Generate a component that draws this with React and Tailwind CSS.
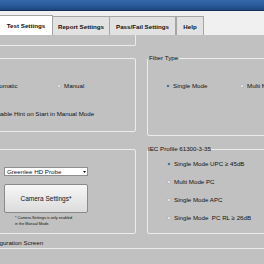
import React from "react";

const Radio = ({ checked }) => (
  <span className="w-[4px] h-[4px] rounded-full bg-[#f7f7f7] border border-[#b5b5b5] flex items-center justify-center shrink-0">
    {checked && <span className="w-[2px] h-[2px] rounded-full bg-[#1c4f7c]" />}
  </span>
);

const Option = ({ label, checked }) => (
  <div className="flex items-center gap-[3px] h-[7px] whitespace-pre">
    <Radio checked={checked} />
    <span>{label}</span>
  </div>
);

const Tab = ({ children, className }) => (
  <div
    className={
      "h-[19px] bg-[#e2e2e2] border-t border-r border-[#a5a5a5] flex items-center justify-center font-bold " +
      className
    }
  >
    {children}
  </div>
);

export default function App() {
  return (
    <div className="w-[264px] h-[264px] overflow-hidden bg-[#c1c1c1] text-[#111] font-['Liberation_Sans',Arial,sans-serif] text-[6.2px] leading-[7px]">
      {/* title bar */}
      <div className="h-[11px] bg-linear-to-b from-[#3368a9] via-[#2b5c9c] to-[#1f4680] border-b border-[#152f57]" />

      {/* tabs */}
      <div className="h-[24px] bg-[#f0f0f0] flex items-end">
        <div className="w-[53px] h-[20px] bg-white border-t border-r border-[#a5a5a5] flex items-center justify-center font-bold">
          Test Settings
        </div>
        <Tab className="w-[57px]">Report Settings</Tab>
        <Tab className="w-[66px]">Pass/Fail Settings</Tab>
        <Tab className="w-[28px] border-l">Help</Tab>
      </div>

      {/* content */}
      <div className="flex">
        <div className="-ml-[24px] w-[160px] shrink-0 flex flex-col">
          <div className="h-[11px] border-b border-r border-[#ececec] rounded-br-[2px]" />

          <div className="mt-[12px] h-[74px] border border-[#ececec] rounded-[2px] pt-[23px]">
            <div className="flex">
              <div className="ml-[6px] w-[74px]">
                <Option label="Automatic" />
              </div>
              <Option label="Manual" />
            </div>
            <div className="ml-[9px] mt-[21px] flex items-center gap-[3px] h-[7px]">
              <span className="w-[4px] h-[4px] bg-[#f7f7f7] border border-[#b5b5b5] shrink-0" />
              <span>Enable Hint on Start in Manual Mode</span>
            </div>
          </div>

          <div className="mt-[17px] h-[85px] border border-[#ececec] rounded-[2px] pl-[27px] pt-[17px]">
            <div className="w-[84px] h-[9px] bg-white border border-[#8f8f8f] flex items-center justify-between pl-[2px] pr-[1px]">
              <span>Greenlee HD Probe</span>
              <svg width="3" height="2" viewBox="0 0 3 2">
                <path d="M0 0h3L1.5 2z" fill="#111" />
              </svg>
            </div>
            <div className="mt-[8px] w-[84px] h-[29px] rounded-[2px] border border-[#8a8a8a] bg-linear-to-b from-[#f7f7f7] to-[#dcdcdc] flex items-center justify-center text-[6.5px]">
              Camera Settings*
            </div>
            <div className="ml-[11px] mt-[3px] text-[3.8px] leading-[5.5px]">
              <div>* Camera Settings is only enabled</div>
              <div>in the Manual Mode.</div>
            </div>
          </div>
        </div>

        <div className="ml-[11px] w-[140px] shrink-0 flex flex-col">
          <fieldset className="mt-[20px] h-[81px] border border-[#ececec] rounded-[2px] pt-[21px]">
            <legend className="leading-[6px] px-[1px]">Fiber Type</legend>
            <div className="flex ml-[18px]">
              <div className="w-[74px]">
                <Option label="Single Mode" checked />
              </div>
              <Option label="Multi Mode" />
            </div>
          </fieldset>

          <fieldset className="mt-[10px] h-[88px] border border-[#ececec] rounded-[2px] pt-[8px]">
            <legend className="leading-[6px] px-0">IEC Profile 61300-3-35</legend>
            <div className="ml-[19px] flex flex-col gap-[11px]">
              <Option label="Single Mode UPC ≥ 45dB" checked />
              <Option label="Multi Mode PC" />
              <Option label="Single Mode APC" />
              <Option label="Single Mode  PC RL ≥ 26dB" />
            </div>
          </fieldset>
        </div>
      </div>

      <div className="mt-[5px] -ml-[15px] h-[7px]">Configuration Screen</div>
      <div className="mt-[2px] border-t border-[#ececec]" />
    </div>
  );
}
